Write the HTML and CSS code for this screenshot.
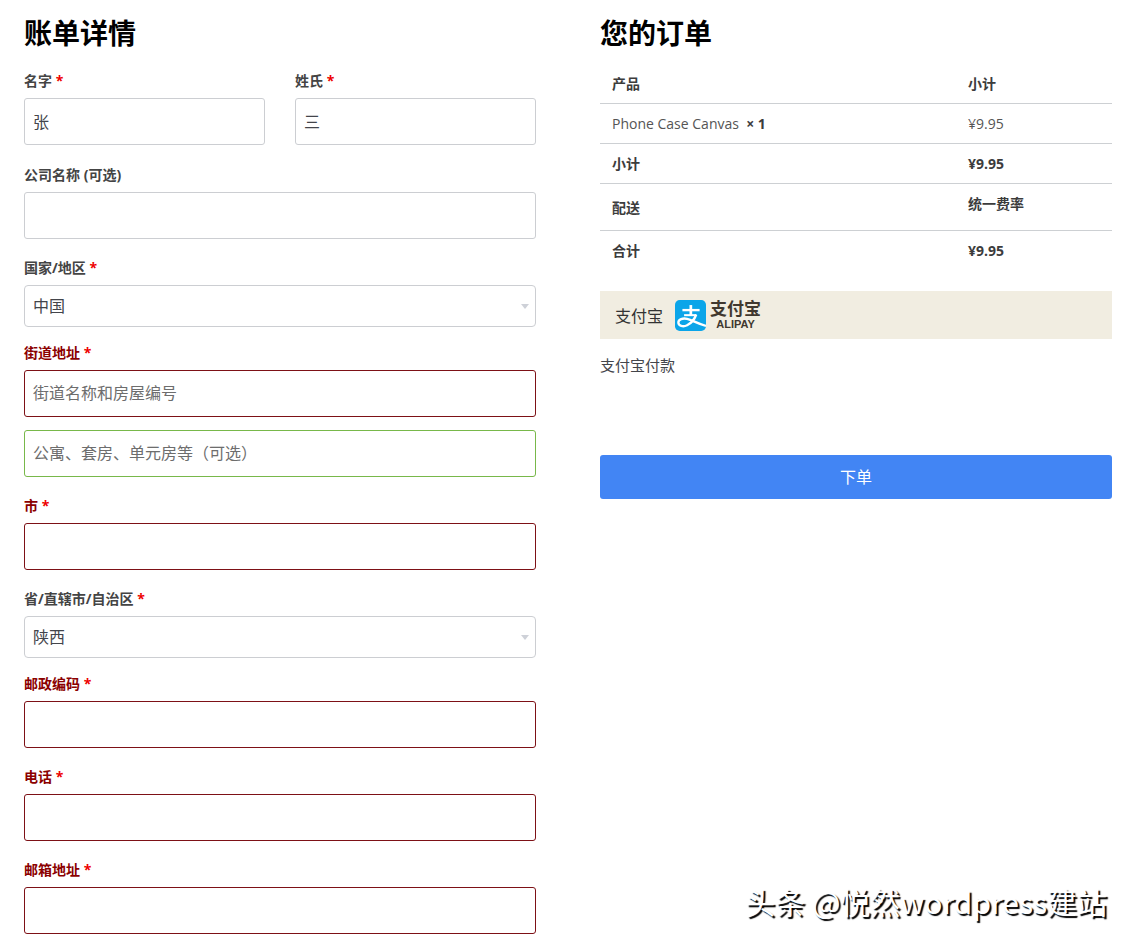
FILE: index.html
```html
<!DOCTYPE html>
<html lang="zh-CN">
<head>
    <meta charset="UTF-8">
    <meta name="viewport" content="width=device-width, initial-scale=1.0">
    <title>结账</title>
    <link rel="stylesheet" href="styles.css">
</head>
<body>
    <form class="checkout">
        <section class="billing">
            <h3>账单详情</h3>

            <div class="fields">
                <div class="form-split">
                    <div class="form-row">
                        <label for="first-name">名字 <span class="required">*</span></label>
                        <input type="text" id="first-name" value="张">
                    </div>
                    <div class="form-row">
                        <label for="last-name">姓氏 <span class="required">*</span></label>
                        <input type="text" id="last-name" value="三">
                    </div>
                </div>

                <div class="form-row">
                    <label for="company">公司名称 (可选)</label>
                    <input type="text" id="company">
                </div>

                <div class="form-row select-row">
                    <label for="country">国家/地区 <span class="required">*</span></label>
                    <div class="select-box">
                        <select id="country">
                            <option>中国</option>
                        </select>
                    </div>
                </div>

                <div class="form-row invalid">
                    <label for="address-1">街道地址 <span class="required">*</span></label>
                    <input type="text" id="address-1" placeholder="街道名称和房屋编号">
                    <input type="text" id="address-2" class="valid" placeholder="公寓、套房、单元房等（可选）" aria-label="公寓、套房、单元房等（可选）">
                </div>

                <div class="form-row invalid">
                    <label for="city">市 <span class="required">*</span></label>
                    <input type="text" id="city">
                </div>

                <div class="form-row select-row">
                    <label for="state">省/直辖市/自治区 <span class="required">*</span></label>
                    <div class="select-box">
                        <select id="state">
                            <option>陕西</option>
                        </select>
                    </div>
                </div>

                <div class="form-row invalid">
                    <label for="postcode">邮政编码 <span class="required">*</span></label>
                    <input type="text" id="postcode">
                </div>

                <div class="form-row invalid">
                    <label for="phone">电话 <span class="required">*</span></label>
                    <input type="tel" id="phone">
                </div>

                <div class="form-row invalid">
                    <label for="email">邮箱地址 <span class="required">*</span></label>
                    <input type="email" id="email">
                </div>
            </div>
        </section>

        <section class="order">
            <h3>您的订单</h3>

            <table class="order-table">
                <thead>
                    <tr>
                        <th class="col-name">产品</th>
                        <th class="col-total">小计</th>
                    </tr>
                </thead>
                <tbody>
                    <tr>
                        <td>Phone Case Canvas&nbsp; <strong>× 1</strong></td>
                        <td>¥9.95</td>
                    </tr>
                </tbody>
                <tfoot>
                    <tr>
                        <th>小计</th>
                        <td>¥9.95</td>
                    </tr>
                    <tr>
                        <th>配送</th>
                        <td><p class="shipping">统一费率</p></td>
                    </tr>
                    <tr>
                        <th>合计</th>
                        <td>¥9.95</td>
                    </tr>
                </tfoot>
            </table>

            <div class="payment-method">
                <span>支付宝</span>
                <div class="alipay">
                    <svg class="alipay-icon" viewBox="0 0 92 92" aria-hidden="true">
                        <rect width="92" height="92" rx="14" fill="#0ba5e9"/>
                        <g fill="none" stroke="#fff">
                            <path d="M22 30H73" stroke-width="7"/>
                            <path d="M47 15V45" stroke-width="8"/>
                            <path d="M27 45H63" stroke-width="6"/>
                            <path d="M63 43C58 57 48 69 36 75C24 81 10 77 10 67C10 57 23 53 36 56C52 60 66 70 92 77" stroke-width="7"/>
                        </g>
                    </svg>
                    <div class="alipay-text">
                        <span class="alipay-cn">支付宝</span>
                        <span class="alipay-en">ALIPAY</span>
                    </div>
                </div>
            </div>
            <p class="payment-note">支付宝付款</p>

            <button type="submit" class="place-order">下单</button>
        </section>
    </form>

    <div class="watermark">头条 @悦然wordpress建站</div>
</body>
</html>
```
FILE: styles.css
```css
* {
    box-sizing: border-box;
}
body {
    margin: 0;
    font-family: "Open Sans", "Noto Sans CJK SC", sans-serif;
    font-size: 14px;
    line-height: 20px;
    color: #43454b;
    background-color: #fff;
}
h3 {
    margin: 0 0 11px;
    font-size: 28px;
    line-height: 40px;
    font-weight: bold;
    color: #000;
}
p {
    margin: 0;
}
.checkout {
    display: grid;
    grid-template-columns: 1fr 1fr;
    align-items: start;
    gap: 64px;
    padding: 13px 21px 8px 24px;
}

/* billing form */
.fields {
    padding-top: 7px;
}
.form-split {
    display: grid;
    grid-template-columns: 1fr 1fr;
    gap: 30px;
}
.form-row {
    margin-bottom: 19px;
}
.form-row:last-child {
    margin-bottom: 0;
}
.form-split .form-row {
    margin-bottom: 20px;
}
.select-row {
    margin-bottom: 16px;
}
label {
    display: block;
    padding-bottom: 7px;
    font-weight: bold;
    color: #444;
}
.required {
    color: #e00;
}
input,
select {
    display: block;
    width: 100%;
    height: 47px;
    padding: 0 8px;
    border: 1px solid #ccced2;
    border-radius: 3px;
    background-color: #fff;
    font-family: inherit;
    font-size: 16px;
    color: #43454b;
}
input {
    padding-bottom: 1px;
}
input::placeholder {
    color: #6d6d6d;
    opacity: 1;
}
input + input {
    margin-top: 13px;
}
.invalid label {
    color: #8b0000;
}
.invalid input {
    border-color: #7d1116;
}
.invalid input.valid {
    border-color: #78b84a;
}
.select-box {
    position: relative;
}
.select-box select {
    height: 42px;
    border-radius: 4px;
    appearance: none;
}
.select-box::after {
    content: "";
    position: absolute;
    top: 19px;
    right: 7px;
    border: 4px solid transparent;
    border-top: 5px solid #ced1d8;
    border-bottom: 0;
    pointer-events: none;
}

/* order summary */
.order-table {
    width: 100%;
    border-collapse: collapse;
    table-layout: fixed;
    color: #3c3c3c;
}
.order-table th,
.order-table td {
    padding: 10px 12px 9px;
    border-bottom: 1px solid #cdd0d3;
    text-align: left;
}
.order-table .col-total {
    width: 156px;
}
.order-table tbody td {
    color: #555;
}
.order-table tfoot td,
.order-table strong {
    font-weight: bold;
    color: #3c3c3c;
}
.order-table tfoot tr:last-child th,
.order-table tfoot tr:last-child td {
    border-bottom: 0;
}
.shipping {
    margin-bottom: 7px;
}
.payment-method {
    display: flex;
    align-items: center;
    gap: 12px;
    height: 48px;
    margin-top: 21px;
    padding: 1px 15px 0;
    background-color: #f1ede1;
    font-size: 16px;
    color: #333;
}
.alipay {
    display: flex;
    align-items: center;
    gap: 4px;
}
.alipay-icon {
    width: 31px;
    height: 31px;
}
.alipay-text {
    display: flex;
    flex-direction: column;
    align-items: center;
    color: #40382f;
}
.alipay-cn {
    font-size: 17px;
    line-height: 17px;
    font-weight: bold;
}
.alipay-en {
    font-family: "Liberation Sans", sans-serif;
    font-size: 11px;
    line-height: 15px;
    font-weight: bold;
}
.payment-note {
    margin: 16px 0 80px;
    font-size: 15px;
    color: #43454b;
}
.place-order {
    display: block;
    width: 100%;
    height: 44px;
    padding: 0 0 2px;
    border: 0;
    border-radius: 3px;
    background-color: #4285f4;
    font-family: inherit;
    font-size: 16px;
    color: #fff;
    cursor: pointer;
}
.watermark {
    position: absolute;
    right: 26px;
    bottom: 22px;
    font-family: "Noto Sans CJK SC", sans-serif;
    font-size: 30px;
    line-height: 40px;
    color: #fff;
    text-shadow: 2px 2px 1px #000;
}
```
